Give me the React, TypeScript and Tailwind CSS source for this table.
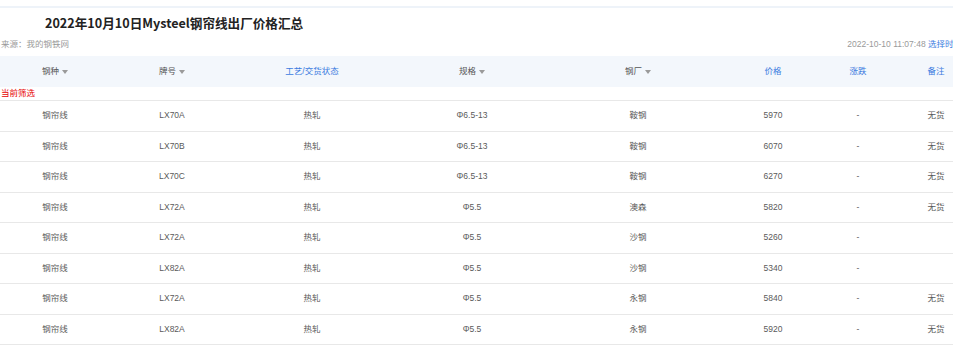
import React from "react";

const rows = [
  ["钢帘线", "LX70A", "热轧", "Φ6.5-13", "鞍钢", "5970", "-", "无货"],
  ["钢帘线", "LX70B", "热轧", "Φ6.5-13", "鞍钢", "6070", "-", "无货"],
  ["钢帘线", "LX70C", "热轧", "Φ6.5-13", "鞍钢", "6270", "-", "无货"],
  ["钢帘线", "LX72A", "热轧", "Φ5.5", "澳森", "5820", "-", "无货"],
  ["钢帘线", "LX72A", "热轧", "Φ5.5", "沙钢", "5260", "-", ""],
  ["钢帘线", "LX82A", "热轧", "Φ5.5", "沙钢", "5340", "-", ""],
  ["钢帘线", "LX72A", "热轧", "Φ5.5", "永钢", "5840", "-", "无货"],
  ["钢帘线", "LX82A", "热轧", "Φ5.5", "永钢", "5920", "-", "无货"],
];

const Arrow = () => (
  <svg width="6" height="4" viewBox="0 0 6 4" className="ml-[3px]">
    <path d="M0 0 L6 0 L3 4 Z" fill="#9a9a9a" />
  </svg>
);

const grid =
  "grid grid-cols-[110px_124px_156px_164px_168px_102px_68px_88px] w-[980px]";

export default function App() {
  return (
    <div
      className="w-[953px] h-[350px] overflow-hidden bg-white"
      style={{ fontFamily: '"Liberation Sans", "Noto Sans CJK SC", sans-serif' }}
    >
      <div className="w-[980px]">
        <div className="mt-[6px] h-[2px] bg-[#eef3f9]" />
        <div
          className="h-[30px] flex items-center pl-[45px] text-[12.6px] font-bold text-[#222]"
          style={{ fontFamily: '"Noto Sans CJK SC", sans-serif' }}
        >
          2022年10月10日Mysteel钢帘线出厂价格汇总
        </div>
        <div className="h-[12px] w-[962px] flex items-center justify-between text-[8.5px] leading-none pl-[1px]">
          <span className="text-[#9a9a9a]">来源：我的钢铁网</span>
          <span className="text-[#9a9a9a]">
            2022-10-10 11:07:48 <span className="text-[#3b7be0]">选择时间</span>
          </span>
        </div>
        <div className={`${grid} mt-[6px] h-[31px] bg-[#f3f7fc] text-[8.5px] items-center`}>
          <div className="flex items-center justify-center text-[#555]">钢种<Arrow /></div>
          <div className="flex items-center justify-center text-[#555]">牌号<Arrow /></div>
          <div className="text-center text-[#3b7be0]">工艺/交货状态</div>
          <div className="flex items-center justify-center text-[#555]">规格<Arrow /></div>
          <div className="flex items-center justify-center text-[#555]">钢厂<Arrow /></div>
          <div className="text-center text-[#3b7be0]">价格</div>
          <div className="text-center text-[#3b7be0]">涨跌</div>
          <div className="text-center text-[#3b7be0]">备注</div>
        </div>
        <div className="h-[14px] border-b border-[#e8e8e8] flex items-center text-[8.5px] text-[#e60000] pl-[1px]">
          当前筛选
        </div>
        {rows.map((r, i) => (
          <div
            key={i}
            className={`${grid} h-[30.5px] border-b border-[#e8e8e8] items-center text-[8.5px] text-[#5a5a5a]`}
          >
            {r.map((c, j) => (
              <div key={j} className="text-center">
                {c}
              </div>
            ))}
          </div>
        ))}
      </div>
    </div>
  );
}
